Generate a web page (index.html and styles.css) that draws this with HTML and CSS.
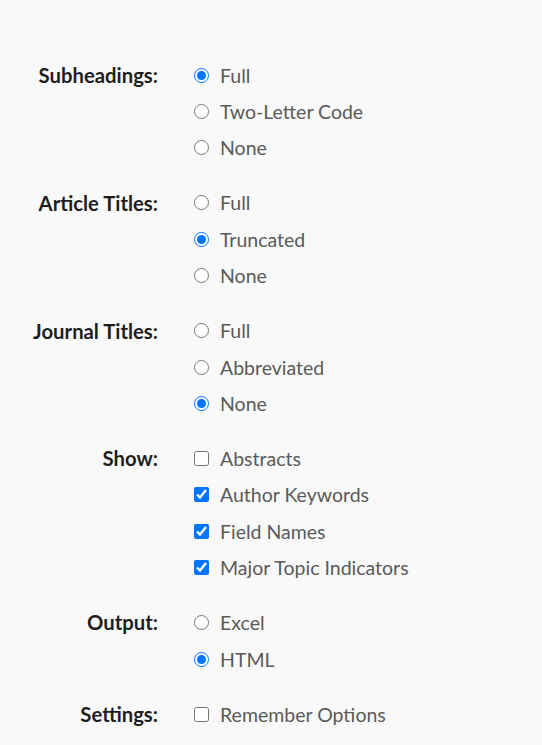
FILE: index.html
```html
<!DOCTYPE html>
<html lang="en">
<head>
    <meta charset="UTF-8">
    <meta name="viewport" content="width=device-width, initial-scale=1.0">
    <title>Display Options</title>
    <link rel="stylesheet" href="styles.css">
</head>
<body>
    <form class="options">
        <!-- Subheadings -->
        <div class="field">
            <div class="field-label">Subheadings:</div>
            <div class="field-options">
                <label class="option"><input type="radio" name="subheadings" checked> Full</label>
                <label class="option"><input type="radio" name="subheadings"> Two-Letter Code</label>
                <label class="option"><input type="radio" name="subheadings"> None</label>
            </div>
        </div>

        <!-- Article Titles -->
        <div class="field">
            <div class="field-label">Article Titles:</div>
            <div class="field-options">
                <label class="option"><input type="radio" name="articleTitles"> Full</label>
                <label class="option"><input type="radio" name="articleTitles" checked> Truncated</label>
                <label class="option"><input type="radio" name="articleTitles"> None</label>
            </div>
        </div>

        <!-- Journal Titles -->
        <div class="field">
            <div class="field-label">Journal Titles:</div>
            <div class="field-options">
                <label class="option"><input type="radio" name="journalTitles"> Full</label>
                <label class="option"><input type="radio" name="journalTitles"> Abbreviated</label>
                <label class="option"><input type="radio" name="journalTitles" checked> None</label>
            </div>
        </div>

        <!-- Show -->
        <div class="field">
            <div class="field-label">Show:</div>
            <div class="field-options">
                <label class="option"><input type="checkbox" name="abstracts"> Abstracts</label>
                <label class="option"><input type="checkbox" name="authorKeywords" checked> Author Keywords</label>
                <label class="option"><input type="checkbox" name="fieldNames" checked> Field Names</label>
                <label class="option"><input type="checkbox" name="majorTopics" checked> Major Topic Indicators</label>
            </div>
        </div>

        <!-- Output -->
        <div class="field">
            <div class="field-label">Output:</div>
            <div class="field-options">
                <label class="option"><input type="radio" name="output"> Excel</label>
                <label class="option"><input type="radio" name="output" checked> HTML</label>
            </div>
        </div>

        <!-- Settings -->
        <div class="field">
            <div class="field-label">Settings:</div>
            <div class="field-options">
                <label class="option"><input type="checkbox" name="remember"> Remember Options</label>
            </div>
        </div>
    </form>
</body>
</html>
```

FILE: styles.css
```css
body {
    font-family: Lato, "Open Sans", sans-serif;
    margin: 0;
    padding: 0;
    background-color: #f9f9f9;
}

.options {
    padding-top: 57px;
}

.field {
    display: grid;
    grid-template-columns: 158px 1fr;
    column-gap: 36px;
    margin-bottom: 18.6px;
}

.field-label {
    text-align: right;
    font-size: 20.3px;
    font-weight: bold;
    color: #1e1e1e;
    line-height: 36.4px;
}

.field-options {
    display: flex;
    flex-direction: column;
}

.option {
    display: flex;
    align-items: center;
    height: 36.4px;
    font-size: 19.5px;
    color: #5a5a5a;
}

.option input {
    margin: 0 11px 0 0;
    width: 15px;
    height: 15px;
}
```
